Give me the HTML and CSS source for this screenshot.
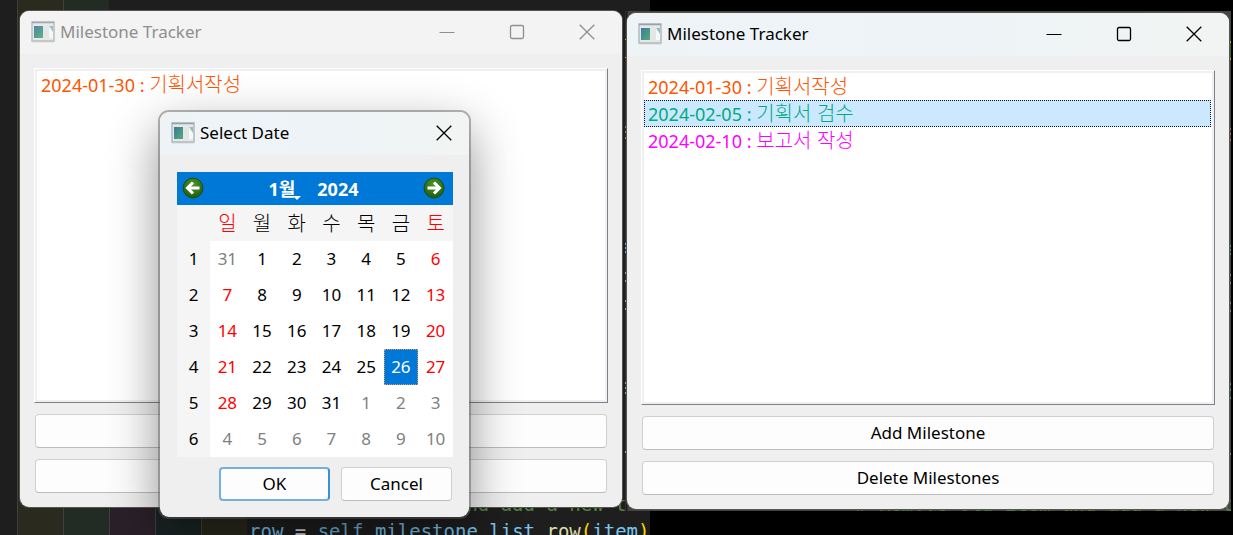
FILE: index.html
```html
<!DOCTYPE html>
<html lang="ko">
<head>
<meta charset="utf-8">
<title>Milestone Tracker</title>
<link rel="stylesheet" href="styles.css">
</head>
<body>
<svg class="defs" width="0" height="0" aria-hidden="true">
  <defs>
    <linearGradient id="pane" x1="0" y1="0" x2="1" y2="1"><stop offset="0" stop-color="#3f78a0"/><stop offset="1" stop-color="#4fae72"/></linearGradient>
    <radialGradient id="ball" cx=".5" cy=".35" r=".65"><stop offset="0" stop-color="#4f9a2c"/><stop offset="1" stop-color="#1d5a10"/></radialGradient>
    <symbol id="app" viewBox="0 0 24 22">
      <rect x="1" y="1" width="22" height="19" fill="#e4e8ea" stroke="#b4b9bd" stroke-width="1.5"/>
      <path d="M1 1.500h22" stroke="#9aa2a8" stroke-width="1.500"/>
      <path d="M1 20.500h22" stroke="#bfc3c6" stroke-width="1.500"/>
      <rect x="3" y="5" width="9" height="12" fill="url(#pane)"/>
      <rect x="12" y="5" width="6" height="12" fill="#e3e5e6"/>
      <rect x="18" y="5" width="4" height="12" fill="#f7f8f8"/>
      <path d="M18 5h4v6z" fill="#8fc0c0"/>
    </symbol>
    <symbol id="min" viewBox="0 0 16 16"><path d="M.5 8.500h15" stroke="currentColor" stroke-width="1"/></symbol>
    <symbol id="max" viewBox="0 0 16 16"><rect x="1.500" y="1.500" width="13" height="13" rx="1.500" fill="none" stroke="currentColor" stroke-width="1.300"/></symbol>
    <symbol id="close" viewBox="0 0 16 16"><path d="M.7 .7l14.600 14.600M15.300 .7L.7 15.300" stroke="currentColor" stroke-width="1.300"/></symbol>
    <symbol id="arrow" viewBox="0 0 22 22">
      <circle cx="11" cy="11" r="10" fill="url(#ball)" stroke="#1c4f17"/>
      <path d="M17.500 11H6M11 5.500L5.500 11l5.500 5.500" fill="none" stroke="#fff" stroke-width="3"/>
    </symbol>
  </defs>
</svg>

<main class="desktop">
  <div class="editor editor-left" aria-hidden="true">
    <div class="guides"><i></i><i></i><i></i><i></i><i></i></div>
    <pre class="code"><span class="comment"># Remove old item and add a new t</span>
<span class="var">row</span> = <span class="self">self</span>.<span class="var">milestone_list</span>.<span class="fn">row</span><span class="par">(</span><span class="var">item</span><span class="par">)</span></pre>
  </div>
  <div class="editor editor-right" aria-hidden="true">
    <pre class="code"><span class="comment"># Remove old item and add a new t</span></pre>
    <svg class="edge edge-start" width="5" height="500">
      <path d="M1.500 0v500" stroke="#1c1c1c" stroke-width="2"/>
      <path d="M0 28.500h1.500v18h-1.500" fill="none" stroke="#c9a800"/>
      <path d="M0 116h2M0 121h2M0 127h2" stroke="#a57463" stroke-width="2"/>
      <path d="M0 233h2M0 237h2M0 241h2M0 372h2M0 377h2M0 382h2" stroke="#6da3c0" stroke-width="2"/>
      <path d="M0 262h2M0 270h2M0 290h2M0 298h2M0 441h2" stroke="#a9a08c" stroke-width="2"/>
    </svg>
    <svg class="edge edge-end" width="2" height="500">
      <path d="M0 31h2M0 48h2" stroke="#c9a800" stroke-width="2"/>
      <path d="M1 32v15" stroke="#3c6a2c" stroke-width="2"/>
      <path d="M0 118h2M0 123h2M0 129h2" stroke="#a57463" stroke-width="2"/>
      <path d="M0 235h2M0 239h2M0 243h2M0 373h2M0 379h2M0 387h2" stroke="#5d8fa8" stroke-width="2"/>
      <path d="M0 264h2M0 272h2M0 292h2M0 300h2M0 443h2" stroke="#8c8c7c" stroke-width="2"/>
    </svg>
  </div>

  <section class="window window-back" aria-label="Milestone Tracker">
    <header class="titlebar">
      <svg class="app-icon"><use href="#app"/></svg>
      <h1 class="title">Milestone Tracker</h1>
      <div class="controls">
        <button type="button" aria-label="Minimize"><svg><use href="#min"/></svg></button>
        <button type="button" aria-label="Maximize"><svg><use href="#max"/></svg></button>
        <button type="button" aria-label="Close"><svg><use href="#close"/></svg></button>
      </div>
    </header>
    <div class="body">
      <ul class="list">
        <li class="item orange">2024-01-30 : <span class="ko">기획서작성</span></li>
      </ul>
      <button type="button" class="button" aria-label="Add"></button>
      <button type="button" class="button" aria-label="Delete"></button>
    </div>
  </section>

  <section class="window window-front" aria-label="Milestone Tracker">
    <header class="titlebar">
      <svg class="app-icon"><use href="#app"/></svg>
      <h1 class="title">Milestone Tracker</h1>
      <div class="controls">
        <button type="button" aria-label="Minimize"><svg><use href="#min"/></svg></button>
        <button type="button" aria-label="Maximize"><svg><use href="#max"/></svg></button>
        <button type="button" aria-label="Close"><svg><use href="#close"/></svg></button>
      </div>
    </header>
    <div class="body">
      <ul class="list">
        <li class="item orange">2024-01-30 : <span class="ko">기획서작성</span></li>
        <li class="item green selected">2024-02-05 : <span class="ko">기획서 검수</span></li>
        <li class="item magenta">2024-02-10 : <span class="ko">보고서 작성</span></li>
      </ul>
      <button type="button" class="button">Add Milestone</button>
      <button type="button" class="button">Delete Milestones</button>
    </div>
  </section>

  <section class="window dialog" role="dialog" aria-label="Select Date">
    <header class="titlebar">
      <svg class="app-icon"><use href="#app"/></svg>
      <h1 class="title">Select Date</h1>
      <div class="controls">
        <button type="button" aria-label="Close"><svg><use href="#close"/></svg></button>
      </div>
    </header>
    <div class="body">
      <div class="calendar">
        <div class="nav">
          <button type="button" class="step" aria-label="Previous month"><svg><use href="#arrow"/></svg></button>
          <div class="period">
            <button type="button" class="month">1월<i class="caret"></i></button>
            <button type="button" class="year">2024</button>
          </div>
          <button type="button" class="step next" aria-label="Next month"><svg><use href="#arrow"/></svg></button>
        </div>
        <table class="days">
          <colgroup><col class="week"><col span="7"></colgroup>
          <thead>
            <tr><td></td><th class="red">일</th><th>월</th><th>화</th><th>수</th><th>목</th><th>금</th><th class="red">토</th></tr>
          </thead>
          <tbody>
            <tr><th>1</th><td class="dim">31</td><td>1</td><td>2</td><td>3</td><td>4</td><td>5</td><td class="red">6</td></tr>
            <tr><th>2</th><td class="red">7</td><td>8</td><td>9</td><td>10</td><td>11</td><td>12</td><td class="red">13</td></tr>
            <tr><th>3</th><td class="red">14</td><td>15</td><td>16</td><td>17</td><td>18</td><td>19</td><td class="red">20</td></tr>
            <tr><th>4</th><td class="red">21</td><td>22</td><td>23</td><td>24</td><td>25</td><td class="today">26</td><td class="red">27</td></tr>
            <tr><th>5</th><td class="red">28</td><td>29</td><td>30</td><td>31</td><td class="dim">1</td><td class="dim">2</td><td class="dim">3</td></tr>
            <tr><th>6</th><td class="dim">4</td><td class="dim">5</td><td class="dim">6</td><td class="dim">7</td><td class="dim">8</td><td class="dim">9</td><td class="dim">10</td></tr>
          </tbody>
        </table>
      </div>
      <div class="actions">
        <button type="button" class="button default">OK</button>
        <button type="button" class="button">Cancel</button>
      </div>
    </div>
  </section>
</main>
</body>
</html>
```
FILE: styles.css
```css
* { box-sizing: border-box; }

body {
  margin: 0;
  background: #000;
  color: #000;
  font: 18px/26px "Noto Sans", "Noto Sans CJK KR", sans-serif;
}

button {
  margin: 0;
  padding: 0;
  border: 0;
  background: none;
  color: inherit;
  font: inherit;
}

.defs { position: absolute; }

.desktop {
  position: relative;
  display: grid;
  grid-template-columns: 1fr 1fr;
  gap: 5px;
  min-height: 100vh;
  padding: 11px 4px 26px 20px;
  overflow: hidden;
}

/* Code editor behind the windows */
.editor {
  position: absolute;
  overflow: hidden;
}

.editor-left {
  inset: 0 auto 0 0;
  width: 650px;
  background: #1e1e1e;
}

.editor-right {
  inset: 11px 2px 24px 625px;
  background: #444;
}

.guides {
  display: flex;
  align-items: flex-end;
  height: 100%;
  padding-left: 17px;
}

.guides i {
  width: 46px;
  height: 90%;
  border-left: 1px solid #404040;
  background: #2b2a1e;
}

.guides i:nth-child(-n+2) { height: 100%; }
.guides i:nth-child(2) { background: #222b24; }
.guides i:nth-child(3) { background: #2a2029; }
.guides i:nth-child(4) { background: #1a2424; }

.code {
  position: absolute;
  margin: 0;
  color: #d4d4d4;
  font: 19px/27px "DejaVu Sans Mono", monospace;
}

.editor-left .code { left: 249px; bottom: -10px; }
.editor-right .code { left: 231px; bottom: -7px; }

.comment { color: #57803f; }
.var { color: #7cc4ec; }
.self { color: #6fb3dc; }
.fn { color: #dcdcaa; }
.par { color: #ffd700; }

.edge { position: absolute; top: 0; }
.edge-start { left: 0; }
.edge-end { right: 0; }

/* Windows */
.window {
  position: relative;
  display: flex;
  flex-direction: column;
  border-radius: 9px;
  background: #efefef;
  box-shadow: 0 0 0 1px #55554f;
}

.window-back { margin-bottom: 2px; }
.window-front { margin-top: 2px; }

.titlebar {
  display: flex;
  flex: none;
  align-items: center;
  height: 43px;
  padding: 0 0 2px 11px;
  border-radius: 9px 9px 0 0;
  background: linear-gradient(90deg, #eef4f6, #edf3f7 50%, #f1f4f2);
}

.window-back .titlebar {
  background: #f3f3f3;
  color: #8f8f8f;
}

.app-icon {
  width: 24px;
  height: 22px;
  margin-right: 5px;
}

.window-back .app-icon { opacity: 0.9; }

.title {
  flex: 1;
  margin: 0;
  font-size: 17px;
  font-weight: 400;
}

.controls { display: flex; }

.controls button {
  display: grid;
  place-items: center;
  width: 70px;
  height: 40px;
}

.controls svg {
  width: 16px;
  height: 16px;
}

.body {
  display: flex;
  flex: 1;
  flex-direction: column;
  gap: 11px;
  padding: 14px;
}

.list {
  flex: 1;
  margin: 0;
  padding: 2px 3px 2px 2px;
  border: 1px solid;
  border-color: #fff #80808c #80808c #fff;
  background: #fff;
  box-shadow: inset 0 0 0 2px #f0f0f0;
  list-style: none;
}

.item {
  height: 27px;
  padding-left: 3px;
  border: 1px solid transparent;
  line-height: 26px;
  white-space: nowrap;
}

.ko {
  font-family: "Noto Sans CJK KR", sans-serif;
  font-size: 20px;
  font-weight: 300;
  line-height: 20px;
}

.orange { color: #ff5500; }
.green { color: #00aa7f; }
.magenta { color: #ff00ff; }

.selected {
  border: 1px dotted #001830;
  background: #cce8ff;
}

.button {
  height: 34px;
  margin: 0 1px;
  border: 1px solid #d0d0d0;
  border-bottom-color: #bcbcbc;
  border-radius: 4px;
  background: #fdfdfd;
  font-size: 17px;
}

/* Date dialog */
.dialog {
  position: absolute;
  top: 112px;
  left: 160px;
  width: 309px;
  box-shadow: 0 0 0 2px rgba(90, 90, 90, 0.45), 0 18px 50px rgba(0, 0, 0, 0.45);
}

.dialog .controls button { width: 50px; }

.dialog .body {
  gap: 10px;
  padding: 17px 16px 16px 17px;
}

.nav {
  display: flex;
  align-items: center;
  justify-content: space-between;
  height: 33px;
  padding: 0 8px 2px 5px;
  background: #0078d7;
  color: #fff;
  font-size: 18px;
  font-weight: 700;
}

.step {
  width: 22px;
  height: 22px;
}

.step svg {
  display: block;
  width: 22px;
  height: 22px;
}

.next { transform: scaleX(-1); }

.period {
  display: flex;
  gap: 22px;
  padding-top: 3px;
}

.month { position: relative; }

.caret {
  position: absolute;
  right: -6px;
  bottom: 2px;
  border: 4px solid transparent;
  border-top-color: #fff;
  border-bottom: 0;
}

.days {
  width: 100%;
  border-collapse: collapse;
  table-layout: fixed;
  background: #fff;
  text-align: center;
}

.week { width: 33px; }

.days th,
.days td {
  height: 36px;
  padding: 0;
  font-size: 17px;
  font-weight: 400;
}

.days thead,
.days tbody th { background: #f5f5f5; }

.days thead th {
  font-family: "Noto Sans CJK KR", sans-serif;
  font-size: 20px;
  font-weight: 300;
}

.days .red { color: #f00; }
.days .dim { color: #808080; }

.days .today {
  background: #0078d7;
  color: #fff;
  outline: 1px dotted #c99a6a;
  outline-offset: -1px;
}

.actions {
  display: flex;
  justify-content: flex-end;
  gap: 9px;
}

.actions .button { width: 111px; }

.default {
  border: 2px solid #74b0e2;
  border-right-color: #3b8fd4;
}
```
